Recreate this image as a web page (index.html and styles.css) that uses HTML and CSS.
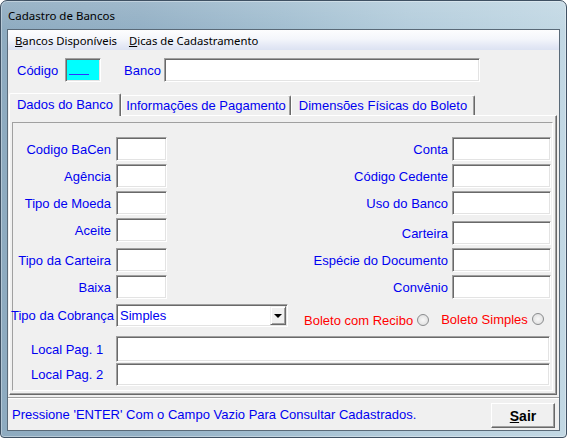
FILE: index.html
```html
<!DOCTYPE html>
<html lang="pt">
<head>
<meta charset="utf-8">
<title>Cadastro de Bancos</title>
<link rel="stylesheet" href="styles.css">
</head>
<body>
<div class="window">
  <div class="titlebar">Cadastro de Bancos</div>
  <div class="client">
    <div class="menubar">
      <span class="menu-item"><u>B</u>ancos Disponíveis</span>
      <span class="menu-item"><u>D</u>icas de Cadastramento</span>
    </div>

    <div class="header">
      <span class="lbl lbl-codigo">Código</span>
      <div class="field code-box"><span class="mask"></span></div>
      <span class="lbl lbl-banco">Banco</span>
      <div class="field banco-input"></div>
    </div>

    <div class="tabs">
      <div class="tab tab-1 active">Dados do Banco</div>
      <div class="tab tab-2">Informações de Pagamento</div>
      <div class="tab tab-3">Dimensões Físicas do Boleto</div>
    </div>

    <div class="sheet">
      <div class="panel">
        <div class="cols">
          <div class="col col-left">
            <div class="row"><span class="lbl">Codigo BaCen</span><div class="field small"></div></div>
            <div class="row"><span class="lbl">Agência</span><div class="field small"></div></div>
            <div class="row"><span class="lbl">Tipo de Moeda</span><div class="field small"></div></div>
            <div class="row"><span class="lbl">Aceite</span><div class="field small"></div></div>
            <div class="row"><span class="lbl">Tipo da Carteira</span><div class="field small"></div></div>
            <div class="row"><span class="lbl">Baixa</span><div class="field small"></div></div>
          </div>
          <div class="col col-right">
            <div class="row"><span class="lbl">Conta</span><div class="field medium"></div></div>
            <div class="row"><span class="lbl">Código Cedente</span><div class="field medium"></div></div>
            <div class="row"><span class="lbl">Uso do Banco</span><div class="field medium"></div></div>
            <div class="row"><span class="lbl">Carteira</span><div class="field medium"></div></div>
            <div class="row"><span class="lbl">Espécie do Documento</span><div class="field medium"></div></div>
            <div class="row"><span class="lbl">Convênio</span><div class="field medium"></div></div>
          </div>
        </div>

        <div class="cobranca">
          <span class="lbl lbl-cob">Tipo da Cobrança</span>
          <div class="field select">
            <span class="select-value">Simples</span>
            <span class="drop-btn"><span class="arrow"></span></span>
          </div>
          <label class="opt opt-1">Boleto com Recibo<span class="radio"></span></label>
          <label class="opt opt-2">Boleto Simples<span class="radio"></span></label>
        </div>

        <div class="local local-1">
          <span class="lbl lbl-local">Local Pag. 1</span>
          <div class="field wide tall"></div>
        </div>
        <div class="local local-2">
          <span class="lbl lbl-local">Local Pag. 2</span>
          <div class="field wide"></div>
        </div>
      </div>
    </div>

    <div class="footer">
      <div class="status">Pressione 'ENTER' Com o Campo Vazio Para Consultar Cadastrados.</div>
      <button class="btn"><u>S</u>air</button>
    </div>
  </div>
</div>
</body>
</html>
```

FILE: styles.css
```css
html, body {
  margin: 0;
  padding: 0;
  background: #ffffff;
}

.window {
  width: 567px;
  height: 438px;
  box-sizing: border-box;
  border: 1px solid #3f5163;
  border-radius: 7px 7px 4px 4px;
  background:
    linear-gradient(to bottom, rgba(255,255,255,0.12), rgba(255,255,255,0) 30px),
    linear-gradient(to right, #8eabc0 0%, #93b0c5 25%, #a3bfd1 50%, #b4cddc 72%, #c2d8e4 100%);
  box-shadow: inset 0 0 0 1px rgba(255,255,255,0.35);
  padding: 0 6px 6px 6px;
  display: flex;
  flex-direction: column;
  font-family: "Liberation Sans", Arial, sans-serif;
  font-size: 13px;
}

.titlebar {
  height: 28px;
  flex: 0 0 28px;
  display: flex;
  align-items: center;
  padding-left: 1px;
  font-family: "Noto Sans", "Open Sans", sans-serif;
  font-size: 11.5px;
  color: #000;
}

.client {
  flex: 1;
  border: 1px solid #5a6a78;
  background: #f0f0f0;
  display: flex;
  flex-direction: column;
}

/* menu */
.menubar {
  height: 20px;
  flex: 0 0 20px;
  display: flex;
  align-items: center;
  gap: 12px;
  padding-left: 7px;
  background: linear-gradient(to bottom, #fdfdfe 0%, #f4f6fb 45%, #e6eaf6 75%, #dce2f2 100%);
  font-family: "Noto Sans", "Open Sans", sans-serif;
  font-size: 11.3px;
  color: #000;
}

.lbl {
  color: #0000f0;
  white-space: nowrap;
}

/* bevelled fields */
.field {
  box-sizing: border-box;
  height: 24px;
  background: #ffffff;
  border: 1px solid;
  border-color: #a0a0a0 #ffffff #ffffff #a0a0a0;
  box-shadow: inset 1px 1px 0 #696969, inset -1px -1px 0 #e3e3e3;
}

/* header */
.header {
  display: flex;
  align-items: center;
  padding: 8px 0 0 9px;
  height: 24px;
  flex: 0 0 auto;
}
.lbl-codigo { width: 48px; }
.code-box {
  width: 36px;
  background: #00ffff;
  padding: 2px 0 0 2px;
}
.mask {
  display: block;
  width: 20px;
  height: 13px;
  margin-left: 1px;
  border-bottom: 1px solid #3030ff;
}
.lbl-banco { width: 40px; margin-left: 23px; }
.banco-input { width: 316px; }

/* tabs */
.tabs {
  display: flex;
  align-items: flex-end;
  height: 22px;
  margin-top: 11px;
  padding-left: 1px;
  position: relative;
  z-index: 1;
}
.tab {
  box-sizing: border-box;
  height: 20px;
  display: flex;
  align-items: center;
  justify-content: center;
  color: #0000f0;
  white-space: nowrap;
  border-top: 1px solid #ffffff;
  border-left: 1px solid #ffffff;
  border-right: 1px solid #696969;
  box-shadow: inset -1px 0 0 #a0a0a0;
  border-radius: 2px 2px 0 0;
  background: #f0f0f0;
}
.tab.active {
  height: 23px;
  margin-bottom: -1px;
  padding-bottom: 1px;
}
.tab-1 { width: 112px; }
.tab-2 { width: 170px; }
.tab-3 { width: 184px; }

/* tab sheet */
.sheet {
  box-sizing: border-box;
  height: 280px;
  flex: 0 0 280px;
  margin: 0 2px 0 1px;
  border: 1px solid;
  border-color: #ffffff #696969 #696969 #ffffff;
  box-shadow: inset -1px -1px 0 #a0a0a0;
  padding: 6px 3px 3px 2px;
}
.panel {
  box-sizing: border-box;
  height: 100%;
  border: 1px solid;
  border-color: #a0a0a0 #ffffff #ffffff #a0a0a0;
  display: flex;
  flex-direction: column;
}

.cols {
  display: flex;
  justify-content: space-between;
  padding: 14px 1px 0 0;
}
.col {
  display: flex;
  flex-direction: column;
  gap: 3px;
}
.row {
  display: flex;
  align-items: center;
  justify-content: flex-end;
}
.col-left .lbl { width: 98px; text-align: right; margin-right: 5px; }
.col-right .lbl { text-align: right; margin-right: 4px; }
.col-left .row:nth-child(4) { margin-bottom: 3px; }
.col-right .row:nth-child(3) { margin-bottom: 3px; }
.small { width: 51px; }
.medium { width: 99px; }

/* cobranca row */
.cobranca {
  display: flex;
  align-items: center;
  margin-top: 5px;
  height: 23px;
}
.lbl-cob {
  width: 102px;
  margin-left: -2px;
  margin-right: 3px;
  text-align: right;
}
.select {
  width: 172px;
  height: 23px;
  display: flex;
  align-items: center;
  justify-content: space-between;
  padding: 0 0 0 3px;
}
.select-value { color: #0000f0; }
.drop-btn {
  box-sizing: border-box;
  width: 16px;
  height: 19px;
  margin-right: 1px;
  background: #f0f0f0;
  border: 1px solid;
  border-color: #f0f0f0 #696969 #696969 #f0f0f0;
  box-shadow: inset 1px 1px 0 #ffffff, inset -1px -1px 0 #a0a0a0;
  display: flex;
  align-items: center;
  justify-content: center;
}
.arrow {
  width: 0;
  height: 0;
  border-left: 4px solid transparent;
  border-right: 4px solid transparent;
  border-top: 4px solid #000;
}
.opt {
  display: flex;
  align-items: center;
  gap: 4px;
  color: #ff0000;
  white-space: nowrap;
  margin-top: 9px;
}
.opt-1 { margin-left: 16px; }
.opt-2 { margin-left: 12px; margin-top: 7px; }
.radio {
  box-sizing: border-box;
  width: 12px;
  height: 12px;
  border-radius: 50%;
  border: 1px solid #8a8c8e;
  background: radial-gradient(circle at 50% 50%, #f8f8f8 0%, #e6e6e6 60%, #d2d2d2 100%);
}

/* local rows */
.local {
  display: flex;
  align-items: center;
  padding-left: 18px;
}
.local-1 { margin-top: 9px; }
.local-2 { margin-top: 1px; }
.lbl-local { width: 85px; }
.wide { width: 434px; height: 23px; }
.wide.tall { height: 26px; }

/* footer */
.footer {
  flex: 1;
  margin-top: 2px;
  border-top: 1px solid #a0a0a0;
  box-shadow: inset 0 1px 0 #ffffff;
  display: flex;
  align-items: flex-start;
  justify-content: space-between;
}
.status {
  align-self: center;
  padding-left: 4px;
  color: #0000f0;
  white-space: nowrap;
}
.btn {
  box-sizing: border-box;
  width: 64px;
  height: 25px;
  margin: 5px 4px 0 0;
  padding: 0;
  font-family: "Liberation Sans", Arial, sans-serif;
  font-size: 14px;
  font-weight: bold;
  color: #000;
  background: #f0f0f0;
  border: 1px solid;
  border-color: #ffffff #696969 #696969 #ffffff;
  box-shadow: inset -1px -1px 0 #a0a0a0;
}
```
